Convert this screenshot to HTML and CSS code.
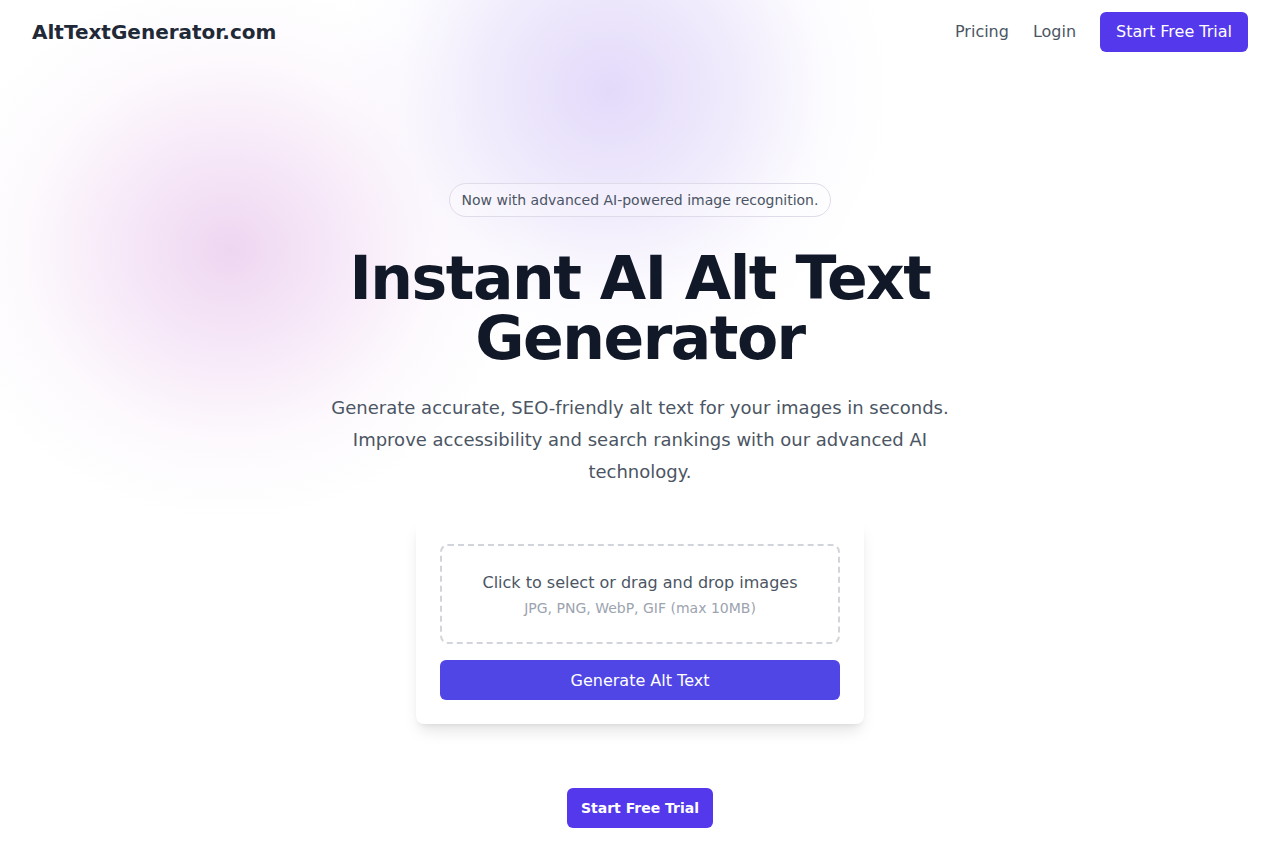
FILE: index.html
```html
<!DOCTYPE html>
<html lang="en">
<head>
<meta charset="utf-8">
<title>AltTextGenerator.com</title>
<link rel="stylesheet" href="styles.css">
</head>
<body>
<div class="page">
  <div class="blob blob-pink"></div>
  <div class="blob blob-purple"></div>
  <header class="nav">
    <div class="logo">AltTextGenerator.com</div>
    <nav class="nav-links">
      <a class="nav-link" href="#">Pricing</a>
      <a class="nav-link" href="#">Login</a>
      <a class="nav-btn" href="#">Start Free Trial</a>
    </nav>
  </header>
  <main class="hero">
    <div class="badge">Now with advanced AI-powered image recognition.</div>
    <h1 class="title">Instant AI Alt Text<br>Generator</h1>
    <p class="subtitle">Generate accurate, SEO-friendly alt text for your images in seconds. Improve accessibility and search rankings with our advanced AI technology.</p>
    <div class="card">
      <div class="dropzone">
        <div class="drop-main">Click to select or drag and drop images</div>
        <div class="drop-sub">JPG, PNG, WebP, GIF (max 10MB)</div>
      </div>
      <button class="gen-btn">Generate Alt Text</button>
    </div>
    <a class="cta" href="#">Start Free Trial</a>
  </main>
</div>
</body>
</html>
```

FILE: styles.css
```css
* { box-sizing: border-box; }
html, body { margin: 0; padding: 0; }
body {
  font-family: "DejaVu Sans", "Liberation Sans", sans-serif;
  background: #ffffff;
  color: #111827;
  overflow: hidden;
}
.page {
  position: relative;
  min-height: 853px;
  overflow: hidden;
}
.blob {
  position: absolute;
  border-radius: 50%;
  pointer-events: none;
  z-index: 0;
}
.blob-pink {
  left: -60px;
  top: -20px;
  width: 580px;
  height: 540px;
  background: radial-gradient(closest-side, rgba(234, 204, 238, 0.8), rgba(240, 216, 243, 0.55) 40%, rgba(248, 236, 249, 0.28) 72%, rgba(255, 255, 255, 0) 100%);
}
.blob-purple {
  left: 330px;
  top: -180px;
  width: 560px;
  height: 540px;
  background: radial-gradient(closest-side, rgba(224, 214, 250, 0.9), rgba(230, 222, 250, 0.6) 45%, rgba(242, 237, 252, 0.25) 75%, rgba(255, 255, 255, 0) 100%);
}
.nav {
  position: relative;
  z-index: 1;
  height: 64px;
  padding: 0 32px;
  display: flex;
  align-items: center;
  justify-content: space-between;
}
.logo {
  font-size: 20px;
  font-weight: 700;
  color: #1f2937;
}
.nav-links {
  display: flex;
  align-items: center;
  gap: 24px;
}
.nav-link {
  font-size: 16px;
  color: #4b5563;
  text-decoration: none;
  margin-top: -1px;
}
.nav-btn {
  display: inline-flex;
  align-items: center;
  height: 40px;
  padding: 0 16px 1px;
  background: #5438ec;
  color: #ffffff;
  font-size: 16px;
  text-decoration: none;
  border-radius: 6px;
}
.hero {
  position: relative;
  z-index: 1;
  display: flex;
  flex-direction: column;
  align-items: center;
  padding-top: 119px;
}
.badge {
  height: 34px;
  display: flex;
  align-items: center;
  padding: 0 12px;
  border: 1px solid #e0dbe8;
  border-radius: 999px;
  font-size: 14px;
  color: #4b5563;
  background: rgba(255, 255, 255, 0.25);
}
.title {
  margin: 31px 0 0;
  font-size: 60px;
  line-height: 60px;
  font-weight: 700;
  text-align: center;
  color: #111827;
  letter-spacing: -1.5px;
}
.subtitle {
  margin: 24px 0 0;
  max-width: 640px;
  font-size: 18px;
  line-height: 32px;
  color: #4b5563;
  text-align: center;
}
.card {
  margin-top: 32px;
  width: 448px;
  padding: 24px;
  background: #ffffff;
  border-radius: 8px;
  box-shadow: 0 10px 15px -3px rgba(0, 0, 0, 0.1), 0 4px 6px -4px rgba(0, 0, 0, 0.1);
  display: flex;
  flex-direction: column;
  gap: 16px;
}
.dropzone {
  height: 100px;
  border: 2px dashed #d1d5db;
  border-radius: 8px;
  display: flex;
  flex-direction: column;
  align-items: center;
  justify-content: center;
  gap: 8px;
}
.drop-main {
  font-size: 16px;
  color: #4b5563;
}
.drop-sub {
  font-size: 14px;
  color: #9ca3af;
}
.gen-btn {
  height: 40px;
  border: none;
  border-radius: 6px;
  background: #4f46e5;
  color: #ffffff;
  font-family: inherit;
  font-size: 16px;
}
.cta {
  margin-top: 64px;
  height: 40px;
  display: inline-flex;
  align-items: center;
  padding: 0 14px;
  background: #5438ec;
  color: #ffffff;
  font-size: 14px;
  font-weight: 700;
  text-decoration: none;
  border-radius: 6px;
}
```
